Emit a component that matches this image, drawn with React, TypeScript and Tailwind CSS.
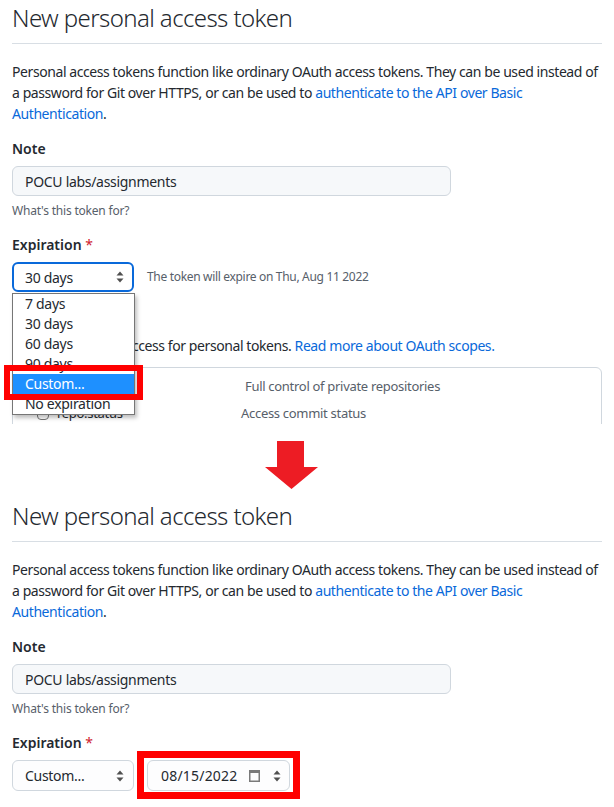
import React from 'react';

// Small up/down triangles used by native selects and the date spinner
const SortArrows = ({ color = '#4f4f4f' }: { color?: string }) => (
    <svg width="8" height="12" viewBox="0 0 8 12">
        <path d="M4 0.5 L7.5 4.5 H0.5 Z" fill={color} />
        <path d="M4 11.5 L7.5 7.5 H0.5 Z" fill={color} />
    </svg>
);

const CalendarIcon = () => (
    <svg width="11" height="13" viewBox="0 0 11 13">
        <rect x="0.75" y="1.75" width="9.5" height="10.5" fill="none" stroke="#7a7a7a" strokeWidth="1.5" />
        <rect x="0" y="1" width="11" height="3" fill="#7a7a7a" />
    </svg>
);

const DownArrow = () => (
    <svg width="53" height="48" viewBox="0 0 53 48">
        <polygon points="12,0 39,0 39,26 53,26 26.5,48 0,26 12,26" fill="#ed1c24" />
    </svg>
);

const options = ['7 days', '30 days', '60 days', '90 days', 'Custom...', 'No expiration'];

const TokenForm: React.FC<{ custom?: boolean }> = ({ custom }) => {
    return (
        <div className="px-3 text-[#24292f]">
            {/* --- Título --- */}
            <h2 className="text-[24px] leading-[36px] font-light tracking-[-0.6px] pb-[7px] border-b border-[#d8dee4]">
                New personal access token
            </h2>

            <p className="mt-[17px] text-[14px] leading-[21px] whitespace-nowrap tracking-[-0.42px]">
                Personal access tokens function like ordinary OAuth access tokens. They can be used instead of
                <br />
                a password for Git over HTTPS, or can be used to{' '}
                <span className="text-[#0969da]">authenticate to the API over Basic</span>
                <br />
                <span className="text-[#0969da]">Authentication</span>.
            </p>

            {/* --- Note --- */}
            <div className="mt-[14px] text-[14px] leading-[21px] font-semibold">Note</div>
            <div className="mt-[7px] w-[439px] h-[30px] flex items-center px-3 bg-[#f6f8fa] border border-[#d0d7de] rounded-md text-[14px] tracking-[-0.3px]">
                POCU labs/assignments
            </div>
            <div className="mt-[6px] text-[12px] leading-[18px] text-[#57606a] tracking-[-0.2px]">What's this token for?</div>

            {/* --- Expiration --- */}
            <div className="mt-[14px] text-[14px] leading-[21px] font-semibold">
                Expiration <span className="text-[#cf222e] font-normal">*</span>
            </div>
            <div className="mt-[7px] flex items-center gap-[13px]">
                <div className="relative">
                    {custom ? (
                        <div className="w-[122px] h-[31px] flex items-center justify-between pl-3 pr-[9px] bg-[#fdfdfe] border border-[#d0d7de] rounded-md text-[14px] tracking-[-0.3px]">
                            <span>Custom...</span>
                            <SortArrows />
                        </div>
                    ) : (
                        <>
                            <div className="w-[122px] h-[30px] flex items-center justify-between pl-3 pr-[8px] bg-white border-2 border-[#0969da] rounded-md text-[14px] tracking-[-0.3px]">
                                <span className="-ml-px">30 days</span>
                                <SortArrows />
                            </div>
                            {/* Lista aberta do select */}
                            <div className="absolute left-0 top-[31px] w-[123px] bg-white border border-[#767676] shadow-[2px_3px_4px_rgba(0,0,0,0.25)] z-10">
                                {options.map(o => (
                                    <div
                                        key={o}
                                        className={
                                            o === 'Custom...'
                                                ? 'h-[20px] leading-[20px] pl-3 text-[14px] tracking-[-0.3px] bg-[#1e90ff] text-white'
                                                : 'h-[20px] leading-[20px] pl-3 text-[14px] tracking-[-0.3px]'
                                        }
                                    >
                                        {o}
                                    </div>
                                ))}
                            </div>
                            <div className="absolute left-[-8px] top-[103px] w-[139px] h-[35px] border-[6px] border-[#ff0000] z-20" />
                        </>
                    )}
                </div>
                {custom ? (
                    <div className="relative">
                        <div className="w-[143px] h-[31px] flex items-center pl-[13px] pr-[8px] bg-[#fdfdfe] border border-[#d0d7de] rounded-md text-[14px] tracking-[0.2px]">
                            <span>08/15/2022</span>
                            <span className="ml-auto mr-[13px] flex"><CalendarIcon /></span>
                            <SortArrows />
                        </div>
                        <div className="absolute left-[-10px] top-[-9px] w-[163px] h-[48px] border-[7px] border-[#ff0000]" />
                    </div>
                ) : (
                    <span className="text-[12px] text-[#57606a] tracking-[-0.32px]">The token will expire on Thu, Aug 11 2022</span>
                )}
            </div>

            {/* --- Scopes (parcialmente visível, só no primeiro) --- */}
            {!custom && (
                <>
                    <div className="mt-[18px] text-[14px] leading-[21px] font-semibold">Select scopes</div>
                    <p className="mt-[4px] text-[14px] leading-[21px] whitespace-nowrap tracking-[-0.42px]">
                        Scopes define the access for personal tokens.{' '}
                        <span className="text-[#0969da]">Read more about OAuth scopes.</span>
                    </p>
                    <div className="mt-[11px] border border-[#d0d7de] rounded-md pt-[9px] h-[80px]">
                        <div className="flex items-center h-[20px] text-[13px] tracking-[-0.3px]">
                            <div className="w-[232px] pl-[8px] flex items-center gap-[6px]">
                                <span className="w-[12px] h-[12px] border border-[#767676] rounded-sm" />
                                <span className="font-semibold">repo</span>
                            </div>
                            <span className="text-[#57606a]">Full control of private repositories</span>
                        </div>
                        <div className="mt-[7px] flex items-center h-[20px] text-[13px] tracking-[-0.3px]">
                            <div className="w-[228px] pl-[24px] flex items-center gap-[8px]">
                                <span className="w-[12px] h-[12px] border border-[#767676] rounded-sm" />
                                <span>repo:status</span>
                            </div>
                            <span className="text-[#57606a]">Access commit status</span>
                        </div>
                    </div>
                </>
            )}
        </div>
    );
};

const App: React.FC = () => {
    return (
        <div className="w-[614px] h-[807px] overflow-hidden bg-white font-['Segoe_UI','Noto_Sans',sans-serif]">
            {/* Antes */}
            <div className="h-[424px] overflow-hidden">
                <TokenForm />
            </div>

            {/* Seta */}
            <div className="h-[74px] pt-[17px] pl-[265px]">
                <DownArrow />
            </div>

            {/* Depois */}
            <TokenForm custom />
        </div>
    );
};

export default App;
